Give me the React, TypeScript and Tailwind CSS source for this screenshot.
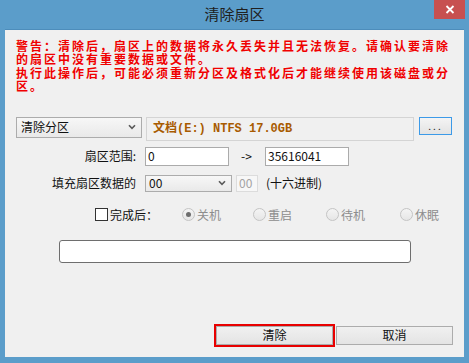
import React from "react";

const ui = { fontFamily: '"Noto Sans CJK SC", "Liberation Sans", sans-serif' };

const Chevron = () => (
  <svg width="8" height="6" viewBox="0 0 8 6" className="shrink-0">
    <path d="M1 1.2 L4 4.4 L7 1.2" fill="none" stroke="#5a5a5a" strokeWidth="1.6" />
  </svg>
);

const Radio = ({ label, checked, width }: { label: string; checked?: boolean; width: string }) => (
  <div className={`flex items-center ${width}`}>
    <span className="flex h-[13px] w-[13px] items-center justify-center rounded-full border border-[#c4c4c4] bg-gradient-to-b from-[#f4f4f4] to-[#e6e6e6]">
      {checked && <span className="h-[5px] w-[5px] rounded-full bg-[#6d6d6d]" />}
    </span>
    <span className="ml-[2px] text-[12px] leading-none text-[#8d8d8d]">{label}</span>
  </div>
);

export default function App() {
  return (
    <div className="flex h-[363px] w-[469px] flex-col bg-[#5b9dca]" style={ui}>
      <div className="relative flex h-[29px] shrink-0 items-center justify-center">
        <span className="text-[15px] text-[#202020]">清除扇区</span>
        <div className="absolute right-[4px] top-0 flex h-[19px] w-[31px] items-center justify-center bg-[#c75050]">
          <svg width="10" height="9" viewBox="0 0 10 9">
            <path d="M1.5 1 L8.5 8 M8.5 1 L1.5 8" stroke="#fff" strokeWidth="1.8" />
          </svg>
        </div>
      </div>

      <div className="mx-[5px] mb-[6px] flex-1 border-t border-[#4d8dbb] bg-[#f0f0f0] text-[12px] text-[#111]">
        {/* warning */}
        <div className="ml-[11px] mt-[9px] w-[440px] text-[12px] font-bold leading-[13.4px] tracking-[2px] text-[#f00000]">
          <div>警告：清除后，扇区上的数据将永久丢失并且无法恢复。请确认要清除的扇区中没有重要数据或文件。</div>
          <div>执行此操作后，可能必须重新分区及格式化后才能继续使用该磁盘或分区。</div>
        </div>

        <div className="ml-[11px] mt-[24px] flex items-start">
          <div className="flex h-[21px] w-[126px] items-center justify-between border border-[#acacac] bg-gradient-to-b from-[#f7f7f7] to-[#e9e9e9] pl-[4px] pr-[5px]">
            <span className="text-[12px] leading-none">清除分区</span>
            <Chevron />
          </div>
          <div className="ml-[4px] flex h-[24px] w-[268px] items-center border border-[#d4d4d4] bg-[#f0f0f0] pl-[6px]">
            <span
              className="text-[12px] font-bold leading-none text-[#a85b00]"
              style={{ fontFamily: '"Liberation Mono", "Noto Sans CJK SC", monospace' }}
            >
              文档(E:) NTFS 17.0GB
            </span>
          </div>
          <div className="ml-[5px] flex h-[18px] w-[33px] items-center justify-center border border-[#3c9ae8] bg-gradient-to-b from-[#f4f4f4] to-[#e3e3e3]">
            <span className="text-[10px] leading-none tracking-[2px] text-[#222]">...</span>
          </div>
        </div>

        <div className="mt-[6px] flex items-center">
          <div className="w-[131px] text-right leading-none">扇区范围:</div>
          <div className="ml-[9px] flex h-[19px] w-[84px] items-center border border-[#ababab] bg-white pl-[2px] leading-none">0</div>
          <div className="ml-[12px] w-[24px] leading-none">-&gt;</div>
          <div className="flex h-[19px] w-[84px] items-center border border-[#ababab] bg-white pl-[2px] leading-none">35616041</div>
        </div>

        <div className="mt-[9px] flex items-center">
          <div className="w-[131px] text-right leading-none">填充扇区数据的</div>
          <div className="ml-[9px] flex h-[17px] w-[87px] items-center justify-between border border-[#acacac] bg-gradient-to-b from-[#f7f7f7] to-[#e9e9e9] pl-[3px] pr-[5px]">
            <span className="leading-none">00</span>
            <Chevron />
          </div>
          <div className="ml-[4px] flex h-[17px] w-[22px] items-center border border-[#dcdcdc] bg-[#f7f7f7] pl-[2px] leading-none text-[#a3a3a3]">00</div>
          <div className="ml-[8px] leading-none">(十六进制)</div>
        </div>

        <div className="ml-[90px] mt-[15px] flex h-[16px] items-center">
          <div className="flex w-[87px] items-center">
            <span className="h-[13px] w-[13px] border border-[#333] bg-white" />
            <span className="ml-[2px] leading-none">完成后：</span>
          </div>
          <Radio label="关机" checked width="w-[71px]" />
          <Radio label="重启" width="w-[73px]" />
          <Radio label="待机" width="w-[74px]" />
          <Radio label="休眠" width="w-[50px]" />
        </div>

        <div className="ml-[54px] mt-[17px] h-[23px] w-[352px] rounded-[3px] border border-[#6e6e6e] bg-white" />

        <div className="ml-[209px] mt-[61px] flex items-center">
          <div className="border-2 border-[#e80000]">
            <div className="flex h-[19px] w-[117px] items-center justify-center border border-[#acacac] bg-gradient-to-b from-[#f0f0f0] to-[#e4e4e4] leading-none">
              清除
            </div>
          </div>
          <div className="ml-[1px] flex h-[19px] w-[117px] items-center justify-center border border-[#acacac] bg-gradient-to-b from-[#f0f0f0] to-[#e4e4e4] leading-none">
            取消
          </div>
        </div>
      </div>
    </div>
  );
}
